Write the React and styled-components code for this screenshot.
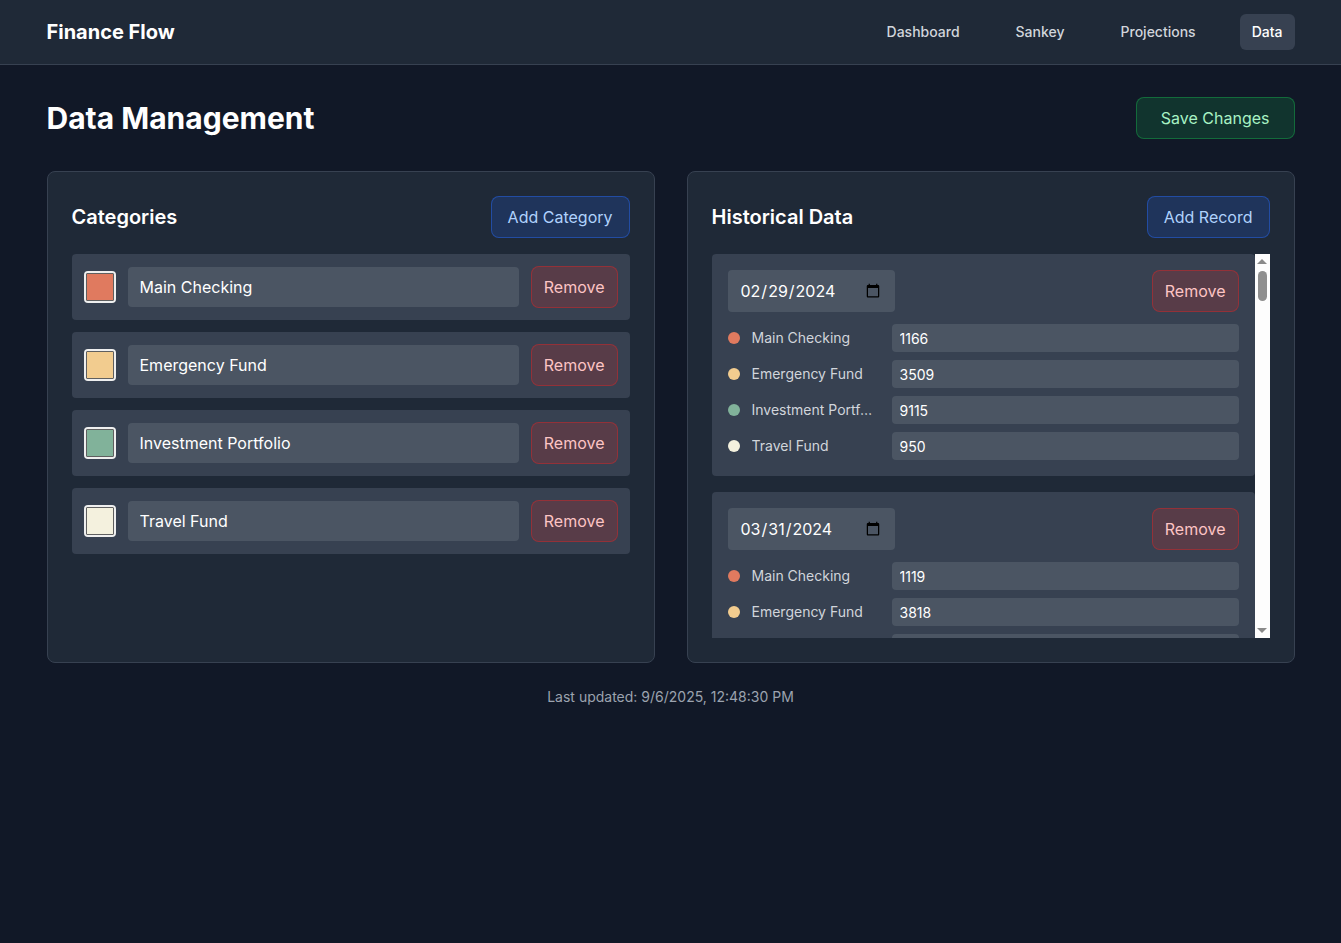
import React, { useLayoutEffect, useRef, useState } from "react";
import styled, { createGlobalStyle } from "styled-components";

const GlobalStyle = createGlobalStyle`
  * { box-sizing: border-box; }
  body {
    margin: 0;
    background: #111827;
    color: #f9fafb;
    font-family: Inter, "Noto Sans", sans-serif;
  }
`;

const initialCategories = [
  { id: 1, name: "Main Checking", color: "#e07a5f" },
  { id: 2, name: "Emergency Fund", color: "#f2cc8f" },
  { id: 3, name: "Investment Portfolio", color: "#81b29a" },
  { id: 4, name: "Travel Fund", color: "#f4f1de" },
];

const dates = [
  "2024-02-29", "2024-03-31", "2024-04-30", "2024-05-31", "2024-06-30",
  "2024-07-31", "2024-08-31", "2024-09-30", "2024-10-31", "2024-11-30",
  "2024-12-31", "2025-01-31", "2025-02-28", "2025-03-31", "2025-04-30",
  "2025-05-31", "2025-06-30", "2025-07-31", "2025-08-31",
];

const initialRecords = dates.map((date, i) => ({
  id: i + 1,
  date,
  values:
    i === 0
      ? [1166, 3509, 9115, 950]
      : i === 1
      ? [1119, 3818, 9402, 1010]
      : [1100 + ((i * 137) % 300), 3800 + i * 210, 9400 + i * 310, 1000 + i * 45],
}));

// scroll list with a drawn classic scrollbar (thumb follows scroll position)
const ScrollList = ({ children }) => {
  const ref = useRef(null);
  const railRef = useRef(null);
  const [thumb, setThumb] = useState({ top: 2, height: 30 });

  const update = () => {
    const el = ref.current;
    const rail = railRef.current;
    if (!el || !rail) return;
    const railH = rail.clientHeight - 4;
    const ratio = el.clientHeight / el.scrollHeight;
    const height = Math.max(ratio * railH, 20);
    const max = el.scrollHeight - el.clientHeight;
    const top = 2 + (max > 0 ? (el.scrollTop / max) * (railH - height) : 0);
    setThumb({ top, height });
  };

  useLayoutEffect(update, [children]);

  const step = (d) => {
    if (ref.current) ref.current.scrollTop += d;
  };

  return (
    <ScrollArea>
      <Scroller ref={ref} onScroll={update}>
        {children}
      </Scroller>
      <Track>
        <ArrowButton onClick={() => step(-40)}>
          <Arrow />
        </ArrowButton>
        <Rail ref={railRef}>
          <Thumb style={{ top: thumb.top, height: thumb.height }} />
        </Rail>
        <ArrowButton onClick={() => step(40)}>
          <Arrow $down />
        </ArrowButton>
      </Track>
    </ScrollArea>
  );
};

const App = () => {
  const [categories, setCategories] = useState(initialCategories);
  const [records, setRecords] = useState(initialRecords);

  const renameCategory = (id, name) =>
    setCategories(categories.map((c) => (c.id === id ? { ...c, name } : c)));
  const recolorCategory = (id, color) =>
    setCategories(categories.map((c) => (c.id === id ? { ...c, color } : c)));
  const removeCategory = (id) => setCategories(categories.filter((c) => c.id !== id));
  const removeRecord = (id) => setRecords(records.filter((r) => r.id !== id));

  return (
    <>
      <GlobalStyle />
      <Header>
        <Inner>
          <HeaderRow>
            <Logo>Finance Flow</Logo>
            <Nav>
              <NavLink>Dashboard</NavLink>
              <NavLink>Sankey</NavLink>
              <NavLink>Projections</NavLink>
              <NavLink $active>Data</NavLink>
            </Nav>
          </HeaderRow>
        </Inner>
      </Header>

      <Main>
        <Inner>
          <TitleRow>
            <Title>Data Management</Title>
            <Button $tone="green">Save Changes</Button>
          </TitleRow>

          <Grid>
            <Card>
              <CardHeader>
                <CardTitle>Categories</CardTitle>
                <Button $tone="blue">Add Category</Button>
              </CardHeader>
              <List>
                {categories.map((c) => (
                  <CategoryRow key={c.id}>
                    <Swatch
                      type="color"
                      value={c.color}
                      onChange={(e) => recolorCategory(c.id, e.target.value)}
                    />
                    <NameInput
                      value={c.name}
                      onChange={(e) => renameCategory(c.id, e.target.value)}
                    />
                    <Button $tone="red" onClick={() => removeCategory(c.id)}>
                      Remove
                    </Button>
                  </CategoryRow>
                ))}
              </List>
            </Card>

            <Card>
              <CardHeader>
                <CardTitle>Historical Data</CardTitle>
                <Button $tone="blue">Add Record</Button>
              </CardHeader>
              <ScrollList>
                {records.map((r) => (
                  <Record key={r.id}>
                    <RecordTop>
                      <DateInput type="date" defaultValue={r.date} />
                      <Button $tone="red" onClick={() => removeRecord(r.id)}>
                        Remove
                      </Button>
                    </RecordTop>
                    <Values>
                      {categories.map((c, i) => (
                        <ValueRow key={c.id}>
                          <Dot style={{ background: c.color }} />
                          <ValueLabel>{c.name}</ValueLabel>
                          <ValueInput defaultValue={r.values[i] ?? 0} />
                        </ValueRow>
                      ))}
                    </Values>
                  </Record>
                ))}
              </ScrollList>
            </Card>
          </Grid>

          <Footer>Last updated: 9/6/2025, 12:48:30 PM</Footer>
        </Inner>
      </Main>
    </>
  );
};

export default App;

const Inner = styled.div`
  max-width: 1280px;
  margin: 0 auto;
  padding: 0 16px;
`;

const Header = styled.header`
  background: #1f2937;
  border-bottom: 1px solid #374151;
`;

const HeaderRow = styled.div`
  height: 64px;
  display: flex;
  align-items: center;
  justify-content: space-between;
`;

const Logo = styled.div`
  font-size: 20px;
  font-weight: 700;
  color: #ffffff;
`;

const Nav = styled.nav`
  display: flex;
  gap: 32px;
`;

const NavLink = styled.a`
  padding: 8px 12px;
  border-radius: 6px;
  font-size: 14px;
  line-height: 20px;
  font-weight: 500;
  cursor: pointer;
  color: ${(p) => (p.$active ? "#ffffff" : "#d1d5db")};
  background: ${(p) => (p.$active ? "#374151" : "transparent")};
`;

const Main = styled.main`
  padding-top: 32px;
`;

const TitleRow = styled.div`
  display: flex;
  align-items: center;
  justify-content: space-between;
  margin-bottom: 32px;
`;

const Title = styled.h1`
  margin: 0;
  font-size: 30px;
  line-height: 36px;
  font-weight: 700;
  color: #ffffff;
`;

const tones = {
  green: { bg: "rgba(22,163,74,0.2)", border: "rgba(22,163,74,0.5)", text: "#a8f2c4", pad: "24px" },
  blue: { bg: "rgba(37,99,235,0.2)", border: "rgba(37,99,235,0.5)", text: "#b0d2fd", pad: "16px" },
  red: { bg: "rgba(220,38,38,0.2)", border: "rgba(220,38,38,0.45)", text: "#fdc4c4", pad: "12px" },
};

const Button = styled.button`
  flex-shrink: 0;
  padding: 8px ${(p) => tones[p.$tone].pad};
  font-family: inherit;
  font-size: 16px;
  line-height: 24px;
  border-radius: 8px;
  cursor: pointer;
  background: ${(p) => tones[p.$tone].bg};
  border: 1px solid ${(p) => tones[p.$tone].border};
  color: ${(p) => tones[p.$tone].text};
`;

const Grid = styled.div`
  display: grid;
  grid-template-columns: 1fr 1fr;
  gap: 32px;
`;

const Card = styled.section`
  background: #1f2937;
  border: 1px solid #374151;
  border-radius: 8px;
  padding: 24px;
`;

const CardHeader = styled.div`
  display: flex;
  align-items: center;
  justify-content: space-between;
  margin-bottom: 16px;
`;

const CardTitle = styled.h2`
  margin: 0;
  font-size: 20px;
  line-height: 28px;
  font-weight: 600;
  color: #ffffff;
`;

const List = styled.div`
  display: flex;
  flex-direction: column;
  gap: 12px;
`;

const CategoryRow = styled.div`
  display: flex;
  align-items: center;
  gap: 12px;
  padding: 12px;
  background: #374151;
  border-radius: 4px;
`;

const Swatch = styled.input`
  width: 32px;
  height: 32px;
  flex-shrink: 0;
  padding: 0;
  border: none;
  border-radius: 4px;
  background: #efefef;
  cursor: pointer;
  &::-webkit-color-swatch-wrapper {
    padding: 2px;
  }
  &::-webkit-color-swatch {
    border: 1px solid #5f5f5f;
    border-radius: 1px;
  }
`;

const NameInput = styled.input`
  flex: 1;
  min-width: 0;
  height: 40px;
  padding: 8px 12px;
  font-family: inherit;
  font-size: 16px;
  color: #ffffff;
  background: #4b5563;
  border: none;
  border-radius: 4px;
  outline: none;
`;

const ScrollArea = styled.div`
  display: flex;
  height: 384px;
`;

const Scroller = styled.div`
  flex: 1;
  min-width: 0;
  overflow-y: auto;
  scrollbar-width: none;
  display: flex;
  flex-direction: column;
  gap: 16px;
  &::-webkit-scrollbar {
    display: none;
  }
`;

const Track = styled.div`
  width: 15px;
  flex-shrink: 0;
  display: flex;
  flex-direction: column;
  background: #fdfdfd;
`;

const ArrowButton = styled.div`
  height: 15px;
  flex-shrink: 0;
  display: flex;
  align-items: center;
  justify-content: center;
  cursor: pointer;
`;

const Arrow = styled.span`
  width: 0;
  height: 0;
  border-left: 5px solid transparent;
  border-right: 5px solid transparent;
  ${(p) =>
    p.$down ? "border-top: 5px solid #8a8a8a;" : "border-bottom: 5px solid #8a8a8a;"}
`;

const Rail = styled.div`
  flex: 1;
  position: relative;
`;

const Thumb = styled.div`
  position: absolute;
  left: 3px;
  right: 3px;
  border-radius: 5px;
  background: #8f8f8f;
`;

const Record = styled.div`
  flex-shrink: 0;
  padding: 16px;
  background: #374151;
  border-radius: 4px;
`;

const RecordTop = styled.div`
  display: flex;
  align-items: center;
  justify-content: space-between;
  margin-bottom: 12px;
`;

const DateInput = styled.input`
  width: 167px;
  height: 42px;
  padding: 8px 12px;
  font-family: inherit;
  font-size: 16px;
  color: #ffffff;
  background: #4b5563;
  border: none;
  border-radius: 4px;
  outline: none;
`;

const Values = styled.div`
  display: flex;
  flex-direction: column;
  gap: 8px;
`;

const ValueRow = styled.div`
  display: flex;
  align-items: center;
  gap: 12px;
`;

const Dot = styled.span`
  width: 12px;
  height: 12px;
  flex-shrink: 0;
  border-radius: 50%;
`;

const ValueLabel = styled.span`
  width: 128px;
  flex-shrink: 0;
  font-size: 14px;
  line-height: 20px;
  color: #d1d5db;
  white-space: nowrap;
  overflow: hidden;
  text-overflow: ellipsis;
`;

const ValueInput = styled.input`
  flex: 1;
  min-width: 0;
  height: 28px;
  padding: 4px 8px;
  font-family: inherit;
  font-size: 14px;
  color: #ffffff;
  background: #4b5563;
  border: none;
  border-radius: 4px;
  outline: none;
`;

const Footer = styled.p`
  margin: 24px 0 0;
  text-align: center;
  font-size: 14px;
  line-height: 20px;
  color: #9ca3af;
`;
